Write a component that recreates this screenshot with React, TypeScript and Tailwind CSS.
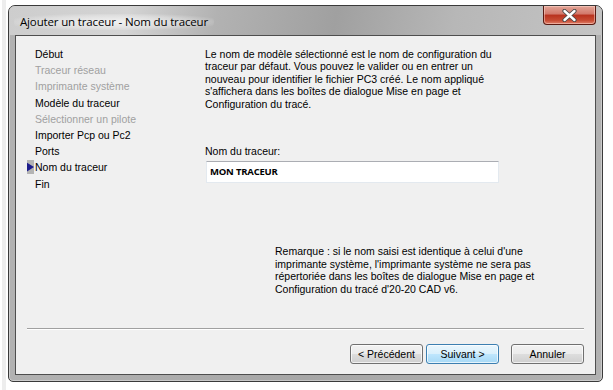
export default function App() {
  const nav = [
    { label: "Début", on: true },
    { label: "Traceur réseau", on: false },
    { label: "Imprimante système", on: false },
    { label: "Modèle du traceur", on: true },
    { label: "Sélectionner un pilote", on: false },
    { label: "Importer Pcp ou Pc2", on: true },
    { label: "Ports", on: true },
    { label: "Nom du traceur", on: true, current: true },
    { label: "Fin", on: true },
  ];

  const btn =
    "w-[73px] h-[20px] rounded-[3px] border text-[10.5px] leading-[18px] shadow-[inset_0_0_0_1px_rgba(255,255,255,0.7)]";

  return (
    <div className="w-[613px] h-[390px] bg-white flex overflow-hidden font-['Liberation_Sans',Arial,sans-serif] text-[10.5px] text-black">
      <div className="w-[2px]" />
      <div className="w-[4px] bg-[#ededed]" />
      <div className="ml-[2px] mt-[5px] w-[595px] h-[377px] rounded-t-[7px] rounded-b-[5px] border border-[#3a3a3a] bg-[linear-gradient(to_right,#b2b2b2,#a7a7a7_50%,#b1b1b1)] flex flex-col px-[6px] pb-[6px] shadow-[inset_0_0_0_1px_rgba(255,255,255,0.35)]">
        {/* barre de titre */}
        <div className="h-[29px] flex items-start justify-between bg-[linear-gradient(100deg,#cdcdcd_0%,#d4d4d4_20%,#b2b2b2_35%,#a0a0a0_55%,#b7b7b7_75%,#c4c4c4_100%)] -mx-[6px] px-[6px] rounded-t-[6px]">
          <div className="mt-[8px] ml-[-1px] px-[6px] rounded-full bg-[radial-gradient(ellipse_at_center,rgba(255,255,255,0.7),rgba(255,255,255,0.3)_55%,rgba(255,255,255,0)_80%)] font-['Open_Sans',sans-serif] text-[11.5px] leading-[16px] tracking-[-0.15px] text-black">
            Ajouter un traceur - Nom du traceur
          </div>
          <div className="w-[53px] h-[19px] rounded-b-[4px] border border-t-0 border-[#5a1a12] bg-[linear-gradient(to_bottom,#e3a597_0%,#d2786a_45%,#b8321e_50%,#c74b33_80%,#e0806a_100%)] flex items-center justify-center shadow-[inset_0_0_0_1px_rgba(255,220,210,0.5)]">
            <svg width="15" height="13" viewBox="0 0 15 13">
              <path d="M2.5 2 L12.5 11 M12.5 2 L2.5 11" stroke="#4a4a4a" strokeWidth="4.2" strokeLinecap="round" />
              <path d="M2.5 2 L12.5 11 M12.5 2 L2.5 11" stroke="#ffffff" strokeWidth="2.4" strokeLinecap="round" />
            </svg>
          </div>
        </div>

        {/* contenu */}
        <div className="flex-1 border border-[#4e4e4e] bg-[#f0f0f0] flex flex-col">
          <div className="flex-1 flex pt-[10px] pl-[19px]">
            <ul className="w-[170px] leading-[16.2px]">
              {nav.map((n) => (
                <li key={n.label} className={`relative ${n.on ? "text-black" : "text-[#a0a0a0]"}`}>
                  {n.current && (
                    <span className="absolute left-[-8px] top-[1px] w-[7px] h-[14px] bg-[#b4b4b4] flex items-center">
                      <svg width="8" height="10" viewBox="0 0 8 10">
                        <path d="M0 0 L8 5 L0 10 Z" fill="#1c1c8c" />
                      </svg>
                    </span>
                  )}
                  {n.label}
                </li>
              ))}
            </ul>

            <div className="flex-1 pt-[1.5px] leading-[12.5px]">
              <p className="whitespace-nowrap">
                Le nom de modèle sélectionné est le nom de configuration du
                <br />
                traceur par défaut. Vous pouvez le valider ou en entrer un
                <br />
                nouveau pour identifier le fichier PC3 créé. Le nom appliqué
                <br />
                s'affichera dans les boîtes de dialogue Mise en page et
                <br />
                Configuration du tracé.
              </p>

              <div className="mt-[35px] leading-[13px]">Nom du traceur:</div>
              <div className="mt-[3px] ml-[1px] w-[293px] h-[22px] bg-white border border-[#e3e9ef] border-t-[#abadb3] flex items-center pl-[3px] font-['Open_Sans',sans-serif] font-bold text-[9.5px] tracking-[-0.2px]">
                MON TRACEUR
              </div>

              <p className="mt-[62px] ml-[70px] whitespace-nowrap">
                Remarque : si le nom saisi est identique à celui d'une
                <br />
                imprimante système, l'imprimante système ne sera pas
                <br />
                répertoriée dans les boîtes de dialogue Mise en page et
                <br />
                Configuration du tracé d'20-20 CAD v6.
              </p>
            </div>
          </div>

          <div className="mx-[11px] border-t border-[#a0a0a0] border-b border-b-white" />

          <div className="flex justify-end pt-[14px] pb-[10px] pr-[11px]">
            <button className={`${btn} w-[72px] border-[#707070] bg-[linear-gradient(to_bottom,#f2f2f2_0%,#ebebeb_50%,#dddddd_51%,#cfcfcf_100%)]`}>
              &lt; Précédent
            </button>
            <button className={`${btn} ml-[3px] border-[#3c7fb1] bg-[linear-gradient(to_bottom,#eaf6fd_0%,#d9f0fc_50%,#bee6fd_51%,#a7d9f5_100%)]`}>
              Suivant &gt;
            </button>
            <button className={`${btn} ml-[12px] border-[#707070] bg-[linear-gradient(to_bottom,#f2f2f2_0%,#ebebeb_50%,#dddddd_51%,#cfcfcf_100%)]`}>
              Annuler
            </button>
          </div>
        </div>
      </div>
    </div>
  );
}
